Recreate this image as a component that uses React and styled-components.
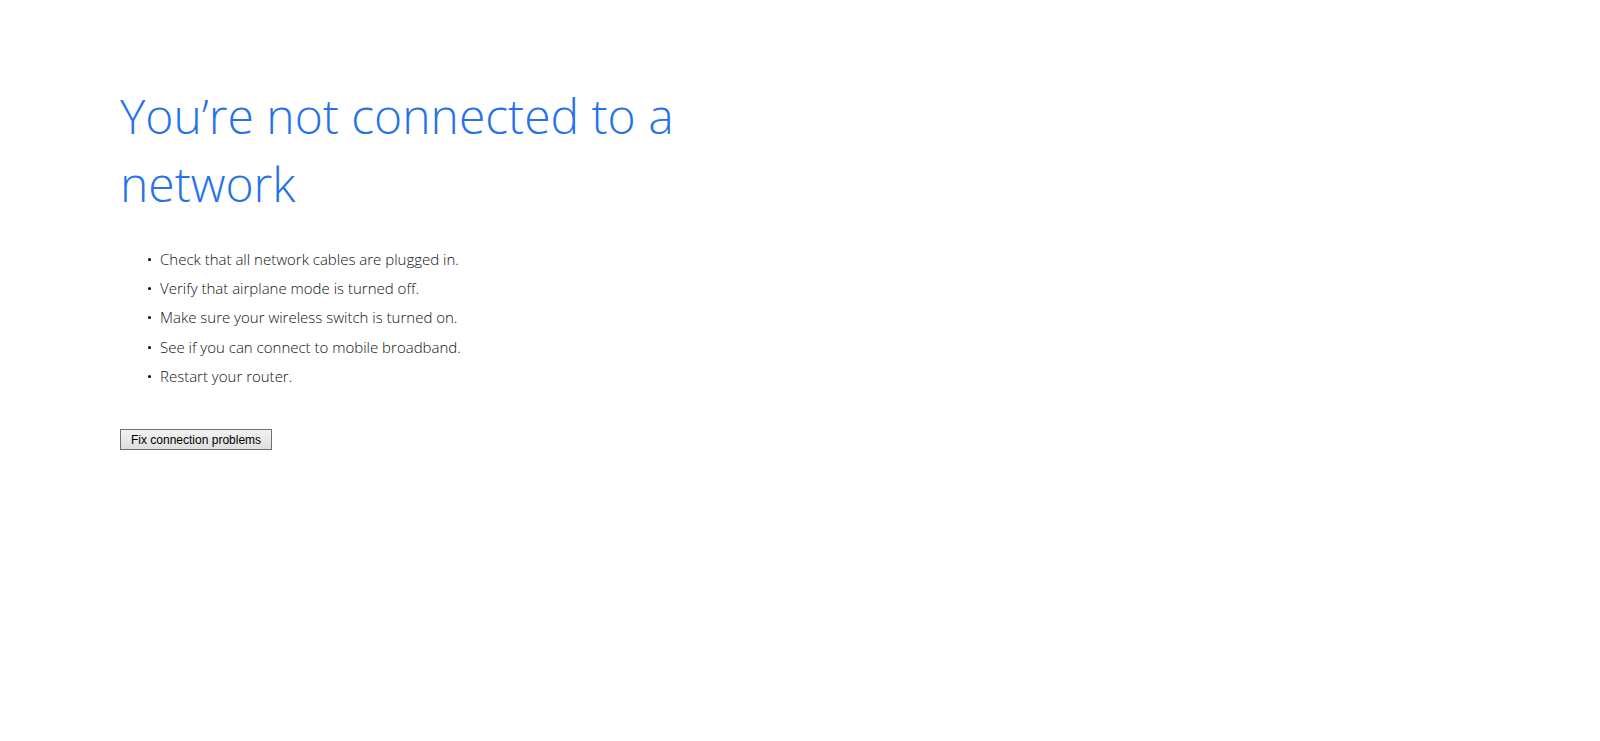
import styled, { createGlobalStyle } from 'styled-components'

const GlobalStyle = createGlobalStyle`
  html, body {
    margin: 0;
    padding: 0;
    background: #fff;
  }
`

const Page = styled.main`
  padding: 82px 0 0 120px;
  font-family: 'Open Sans', 'Segoe UI', sans-serif;
`

const Title = styled.h1`
  margin: 0;
  width: 600px;
  font-size: 48px;
  font-weight: 300;
  line-height: 68px;
  color: #2672ec;
`

const Tips = styled.ul`
  margin: 27px 0 0;
  padding: 0 0 0 40px;
  list-style: none;
`

const Tip = styled.li`
  position: relative;
  font-size: 15px;
  font-weight: 300;
  line-height: 29.2px;
  color: #111;

  &::before {
    content: '';
    position: absolute;
    left: -12px;
    top: 13px;
    width: 3px;
    height: 3px;
    border-radius: 50%;
    background: #000;
  }
`

const FixButton = styled.button`
  margin-top: 38px;
  height: 21px;
  padding: 0 10px;
  font-family: 'Liberation Sans', Arial, sans-serif;
  font-size: 12px;
  color: #000;
  background: linear-gradient(#f2f2f2, #dedede);
  border: 1px solid #707070;
  border-radius: 0;
`

const tips = [
  'Check that all network cables are plugged in.',
  'Verify that airplane mode is turned off.',
  'Make sure your wireless switch is turned on.',
  'See if you can connect to mobile broadband.',
  'Restart your router.',
]

const App = () => {
  return (
    <>
      <GlobalStyle />
      <Page>
        <Title>You’re not connected to a network</Title>
        <Tips>
          {tips.map((tip) => (
            <Tip key={tip}>{tip}</Tip>
          ))}
        </Tips>
        <FixButton>Fix connection problems</FixButton>
      </Page>
    </>
  )
}

export default App
